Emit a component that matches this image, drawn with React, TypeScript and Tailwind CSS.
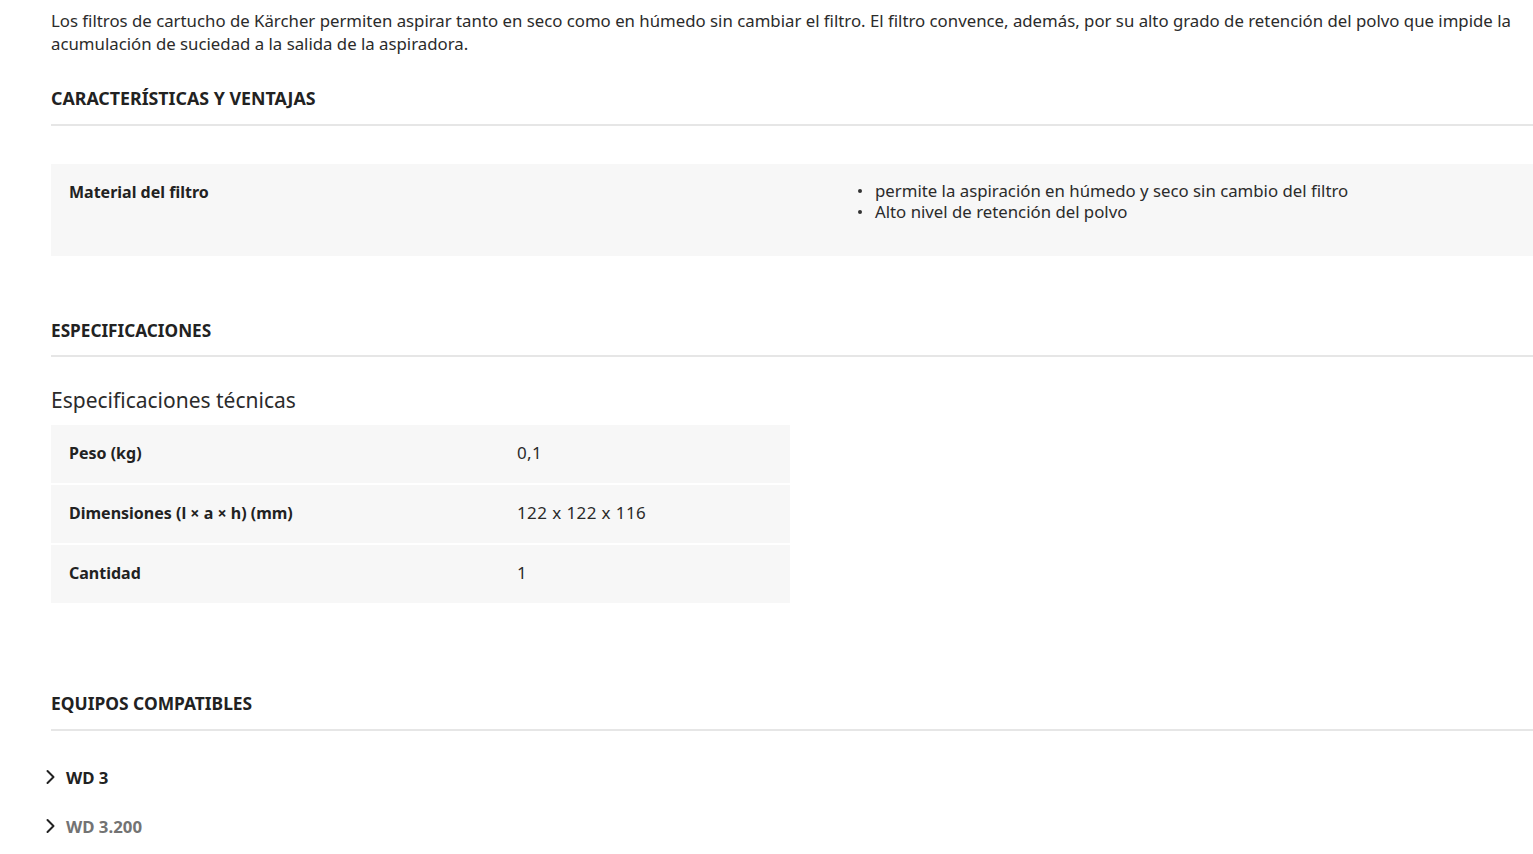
import React from "react";

const font = { fontFamily: "'Noto Sans', 'Open Sans', sans-serif" };

function SectionHeading({ children, className = "", gap = "mt-[14px]", size = "text-[17.4px]" }: { children: React.ReactNode; className?: string; gap?: string; size?: string }) {
  return (
    <div className={className}>
      <h2 className={`${size} font-bold leading-[24px] text-[#222]`}>{children}</h2>
      <div className={`h-[2px] bg-[#e6e6e6] ${gap}`} />
    </div>
  );
}

function Chevron() {
  return (
    <svg width="11" height="16" viewBox="0 0 11 16" className="shrink-0 -mt-[3px]">
      <path d="M2.5 2 L8.5 8 L2.5 14" fill="none" stroke="#222" strokeWidth="2" strokeLinecap="round" strokeLinejoin="round" />
    </svg>
  );
}

export default function App() {
  const specs = [
    ["Peso (kg)", "0,1"],
    ["Dimensiones (l × a × h) (mm)", "122 x 122 x 116"],
    ["Cantidad", "1"],
  ];
  return (
    <div className="bg-white min-h-[854px] overflow-hidden text-[#222]" style={font}>
      <div className="ml-[51px] w-[1482px]">
        <p className="pt-[9px] text-[16.8px] leading-[23px] text-[#2b2b2b] pr-[6px]">
          Los filtros de cartucho de Kärcher permiten aspirar tanto en seco como en húmedo sin cambiar el filtro. El filtro convence, además, por su alto grado de retención del polvo que impide la acumulación de suciedad a la salida de la aspiradora.
        </p>

        <SectionHeading className="mt-[31px]" size="text-[17.8px]">CARACTERÍSTICAS Y VENTAJAS</SectionHeading>

        <div className="mt-[38px] h-[92px] bg-[#f7f7f7] flex">
          <div className="w-[807px] pl-[18px] pt-[16px]">
            <span className="text-[16px] font-bold leading-[22px] text-[#222]">Material del filtro</span>
          </div>
          <ul className="pt-[16px] text-[16.8px] leading-[21px] text-[#2b2b2b]">
            <li className="flex items-center gap-[13px]"><span className="w-[4px] h-[4px] bg-[#333] rounded-full inline-block" />permite la aspiración en húmedo y seco sin cambio del filtro</li>
            <li className="flex items-center gap-[13px]"><span className="w-[4px] h-[4px] bg-[#333] rounded-full inline-block" />Alto nivel de retención del polvo</li>
          </ul>
        </div>

        <SectionHeading className="mt-[63px]" gap="mt-[12px]" size="text-[17.2px]">ESPECIFICACIONES</SectionHeading>

        <h3 className="mt-[29px] text-[21px] leading-[28px] text-[#2b2b2b]">Especificaciones técnicas</h3>

        <div className="mt-[11px] w-[739px] flex flex-col gap-[2px]">
          {specs.map(([k, v]) => (
            <div key={k} className="h-[58px] bg-[#f7f7f7] flex items-center pb-[3px]">
              <div className="w-[448px] pl-[18px] text-[16px] font-bold text-[#222]">{k}</div>
              <div className="pl-[18px] text-[17px] tracking-[0.4px] text-[#2b2b2b]">{v}</div>
            </div>
          ))}
        </div>

        <SectionHeading className="mt-[88px]">EQUIPOS COMPATIBLES</SectionHeading>

        <div className="mt-[36px] flex flex-col gap-[27px] -ml-[6px]">
          <div className="flex items-center gap-[10px] h-[22px]">
            <Chevron />
            <span className="text-[16.8px] font-bold text-[#222]">WD 3</span>
          </div>
          <div className="flex items-center gap-[10px] h-[22px]">
            <Chevron />
            <span className="text-[16.8px] font-bold text-[#737373]">WD 3.200</span>
          </div>
        </div>
      </div>
    </div>
  );
}
